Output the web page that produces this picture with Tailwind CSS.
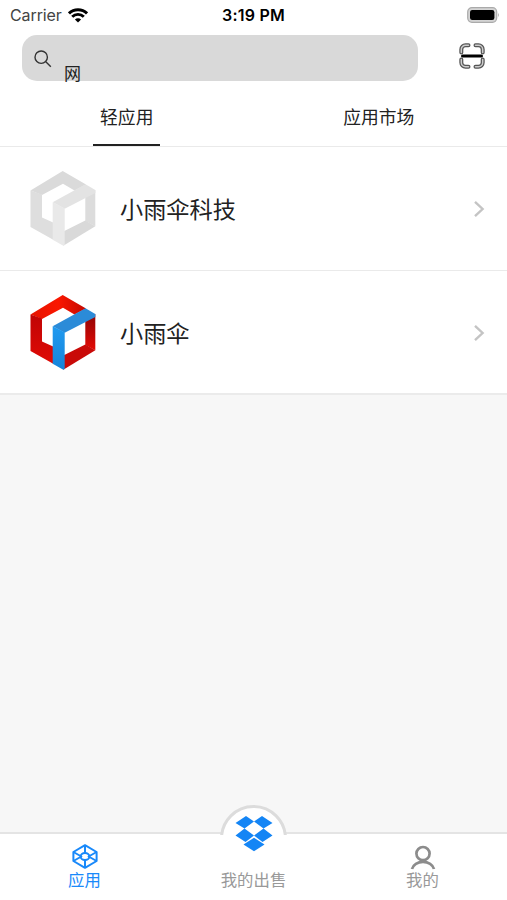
<!doctype html>
<html lang="zh">
<head>
  <meta charset="UTF-8">
  <meta name="viewport" content="width=device-width, initial-scale=1.0">
  <title>应用</title>
  <script src="https://cdn.jsdelivr.net/npm/@tailwindcss/browser@4"></script>
</head>
<body class="h-[900px] flex flex-col overflow-hidden bg-[#f7f7f7] text-[#222] font-['Inter','Noto_Sans_CJK_SC',sans-serif]">
  <!-- Status bar -->
  <div class="h-[30px] shrink-0 grid grid-cols-3 items-center pl-[10px] pr-[7px] bg-white">
    <div class="flex items-center gap-[6px]">
      <span class="text-[16px] tracking-[-0.1px] text-[#444]">Carrier</span>
      <svg class="w-5 h-[15px]" viewBox="0 0 20 15" fill="none" stroke="#000" stroke-width="2.9">
        <path d="M1 5.4a12.8 12.8 0 0 1 18 0M4.2 8.8a8.2 8.2 0 0 1 11.6 0" />
        <path d="M10 14.6L6.9 11.6a4.4 4.4 0 0 1 6.2 0z" fill="#000" stroke="none" />
      </svg>
    </div>
    <div class="pr-[3px] text-center text-[16px] tracking-[0.2px] font-semibold text-black whitespace-nowrap">3:19 PM</div>
    <svg class="w-[34px] h-[18px] justify-self-end" viewBox="0 0 34 18">
      <rect x="1.7" y="1.7" width="29" height="14.6" rx="4.2" fill="#d4d4d4" stroke="#aaa" stroke-width="1.2" />
      <rect x="4" y="4" width="24.4" height="10" rx="2.2" fill="#000" />
      <path d="M32 6.8q1.8 2.2 0 4.4z" fill="#aaa" />
    </svg>
  </div>

  <!-- Search -->
  <div class="h-[57px] shrink-0 flex items-start bg-white pt-[5px] pl-[22px] pr-[22px]">
    <div class="w-[396px] h-[46px] flex items-start rounded-[15px] bg-[#d9d9d9]">
      <svg class="w-[18px] h-[18px] mt-[15px] ml-[12px]" viewBox="0 0 18 18" fill="none" stroke="#333" stroke-width="1.4">
        <circle cx="7.2" cy="7.2" r="6.2" />
        <path d="M11.8 11.8l5 5" />
      </svg>
      <span class="ml-[12px] mt-[31px] text-[17px] leading-[16px]">网</span>
    </div>
    <svg class="w-[26px] h-[26px] mt-[8px] ml-auto" viewBox="0 0 26 26" fill="none">
      <path d="M2.3 9.5V6.5a4.2 4.2 0 0 1 4.2-4.2h3M16.5 2.3h3a4.2 4.2 0 0 1 4.2 4.2v3M23.7 16.5v3a4.2 4.2 0 0 1-4.2 4.2h-3M9.5 23.7h-3a4.2 4.2 0 0 1-4.2-4.2v-3" stroke="#555" stroke-width="4" stroke-linecap="round" />
      <path d="M2.3 9.5V6.5a4.2 4.2 0 0 1 4.2-4.2h3M16.5 2.3h3a4.2 4.2 0 0 1 4.2 4.2v3M23.7 16.5v3a4.2 4.2 0 0 1-4.2 4.2h-3M9.5 23.7h-3a4.2 4.2 0 0 1-4.2-4.2v-3" stroke="#ccc" stroke-width="1.5" stroke-linecap="round" />
      <path d="M3.5 13h19" stroke="#000" stroke-width="3" stroke-linecap="round" />
    </svg>
  </div>

  <!-- Tabs -->
  <div class="h-[60px] shrink-0 grid grid-cols-2 justify-items-center bg-white border-b border-[#eaeaea] text-[17.8px] leading-[61px]">
    <div class="w-[67px] h-[59px] text-center border-b-2 border-[#222]">轻应用</div>
    <div class="pr-[3px]">应用市场</div>
  </div>

  <!-- App list -->
  <div class="shrink-0 bg-white text-[23.2px]">
    <div class="h-[124px] flex items-center pl-[30px] pr-[22px] border-b border-[#eaeaea]">
      <svg class="w-[66px] h-[75px]" viewBox="0 0 66 75">
        <path d="M32.7 0L.5 19.5 12 24 33 12.7 44.5 19.5 56 13.6z" fill="#dadada" />
        <path d="M.5 19.5V56l23.2 13V51.8L12 46.5V23.5z" fill="#dedede" />
        <path d="M65.3 19v36.3L55.3 50V24z" fill="#dcdcdc" />
        <path d="M65.3 55.3L33.3 74.7V60.5L55.3 49.5z" fill="#d9d9d9" />
        <path d="M22.7 31.3L55.5 13.3l9.8 5.7v3L34.7 37.8z" fill="#e3e3e3" />
        <path d="M22.7 31.3l12 6v36.6l-1.4.8-10.6-6z" fill="#e9e9e9" />
      </svg>
      <span class="ml-[24px] mt-[3px] font-normal">小雨伞科技</span>
      <svg class="w-3 h-[18px] ml-auto" viewBox="0 0 12 18" fill="none" stroke="#c4c4c4" stroke-width="2.4"><path d="M2 1.8L9.6 9 2 16.2" /></svg>
    </div>
    <div class="h-[124px] flex items-center pl-[30px] pr-[22px] border-b-2 border-[#ebebeb]">
      <svg class="w-[66px] h-[75px]" viewBox="0 0 66 75">
        <defs>
          <linearGradient id="red" x1="0" y1="0" x2="1" y2="0"><stop offset="0" stop-color="#e51400" /><stop offset=".5" stop-color="#fa1700" /><stop offset="1" stop-color="#c40800" /></linearGradient>
          <linearGradient id="side" x1="0" y1="0" x2="0" y2="1"><stop offset="0" stop-color="#c00505" /><stop offset="1" stop-color="#e00a05" /></linearGradient>
          <linearGradient id="right" x1="0" y1="0" x2="0" y2="1"><stop offset="0" stop-color="#8f0505" /><stop offset="1" stop-color="#e50a05" /></linearGradient>
          <linearGradient id="blue" x1="0" y1="0" x2="0" y2="1"><stop offset="0" stop-color="#209af0" /><stop offset="1" stop-color="#1684da" /></linearGradient>
        </defs>
        <path d="M32.7 0L.5 19.5 12 24 33 12.7 44.5 19.5 56 13.6z" fill="url(#red)" />
        <path d="M.5 19.5V56l23.2 13V51.8L12 46.5V23.5z" fill="url(#side)" />
        <path d="M65.3 19v36.3L55.3 50V24z" fill="url(#right)" />
        <path d="M65.3 55.3L33.3 74.7V60.5L55.3 49.5z" fill="#c90a08" />
        <path d="M22.7 31.3L55.5 13.3l9.8 5.7v3L34.7 37.8z" fill="#2b8bd8" />
        <path d="M22.7 31.3l12 6v36.6l-1.4.8-10.6-6z" fill="url(#blue)" />
      </svg>
      <span class="ml-[24px] mt-[4px] font-normal">小雨伞</span>
      <svg class="w-3 h-[18px] ml-auto mt-px" viewBox="0 0 12 18" fill="none" stroke="#c4c4c4" stroke-width="2.4"><path d="M2 1.8L9.6 9 2 16.2" /></svg>
    </div>
  </div>

  <!-- Bottom nav -->
  <div class="relative mt-auto h-[68px] shrink-0 grid grid-cols-3 bg-white border-t-2 border-[#e4e4e4] text-[16.4px] leading-[20px] text-[#999]">
    <div class="absolute left-[220px] -top-[29px] w-[67px] h-[30px] overflow-hidden">
      <div class="w-[67px] h-[67px] rounded-full bg-white border-[3px] border-[#dcdcdc]"></div>
    </div>
    <div class="flex flex-col items-center pt-[10px] text-[#1989fa]">
      <svg class="w-[26px] h-[25px]" viewBox="0 0 26 25" fill="none" stroke="#1989fa" stroke-width="2" stroke-linejoin="round">
        <path d="M13 1.2L24.6 8v9L13 23.8 1.4 17V8z" />
        <path d="M13 1.2v7.8M13 16v7.8M1.4 8l8 4.5-8 4.5M24.6 8l-8 4.5 8 4.5" />
        <ellipse cx="13" cy="12.5" rx="4.4" ry="3.5" />
      </svg>
      <span class="mt-px">应用</span>
    </div>
    <div class="relative flex flex-col items-center pt-[36px]">
      <svg class="absolute -top-[18px] w-[38px] h-[36px]" viewBox="0 0 38 36" fill="#1485f5">
        <path d="M11 0l8 5.5L9.5 12.6.5 7zM27 0l10.5 7-9 5.6L19 5.5zM9.5 12.6l9.5 7-8.5 6.5L.5 19.5zM28.5 12.6l9 6.9-10 6.6L19 19.6z" />
        <path d="M19 21.8l10.5 6.8L19 35.2 8.5 28.6z" />
      </svg>
      <span>我的出售</span>
    </div>
    <div class="flex flex-col items-center pt-[11px]">
      <svg class="w-[26px] h-[25px]" viewBox="0 0 26 25" fill="none" stroke="#8c8c8c" stroke-width="2.7">
        <circle cx="13" cy="8.6" r="6.6" />
        <path d="M2 24a11.2 8.8 0 0 1 22 0" />
      </svg>
      <span>我的</span>
    </div>
  </div>
</body>
</html>
